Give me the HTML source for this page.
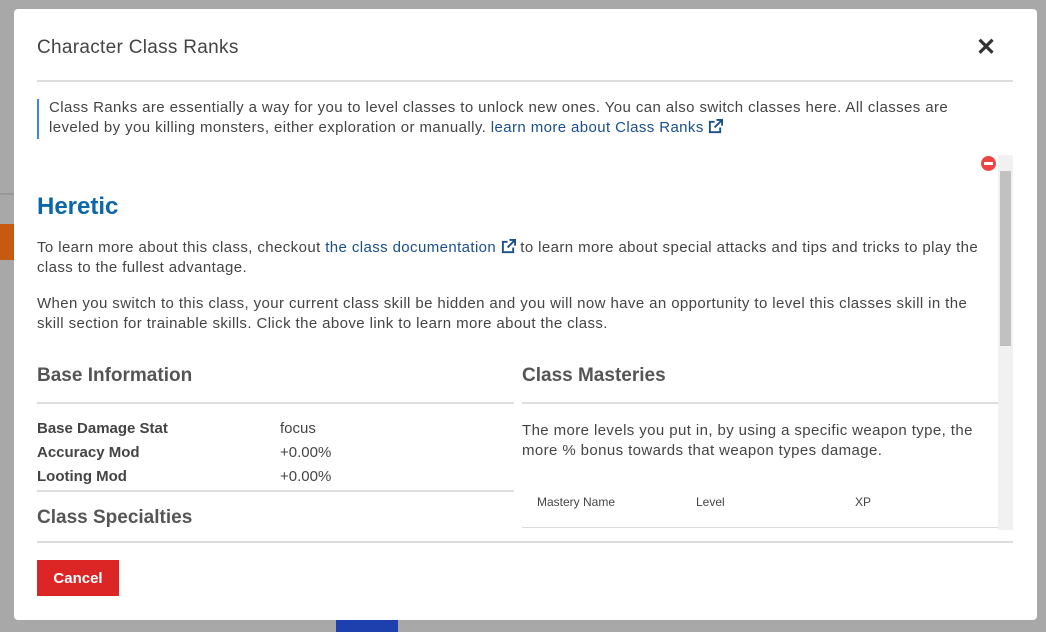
<!DOCTYPE html><html><head><style>
body{margin:0;width:1046px;height:632px;background:#a8a8a8;font-family:"Liberation Sans",sans-serif;overflow:hidden;position:relative;color:#444}
.m{position:absolute;left:14px;top:9px;width:1023px;height:611px;background:#fff;border-radius:4px}
.a{position:absolute}
.hr{position:absolute;height:2px;background:#ddd}
a{color:#1a4f8a;text-decoration:none}
p{margin:0;font-size:15px;line-height:20px;letter-spacing:.4px}
.ext{display:inline-block;vertical-align:-2px}
</style></head><body>
<div class="a" style="left:0;top:193px;width:14px;height:2px;background:#999"></div>
<div class="a" style="left:0;top:224px;width:14px;height:36px;background:#c65a10"></div>
<div class="m">
<div class="a" style="left:23px;top:28px;font-size:19px;color:#444;letter-spacing:.3px">Character Class Ranks</div>
<div class="a" style="left:962px;top:24px;font-size:24px;font-weight:bold;color:#333">✕</div>
<div class="hr" style="left:23px;top:71px;width:976px"></div>
<div class="a" style="left:23px;top:90px;width:2px;height:40px;background:#3b82f6"></div>
<p class="a" style="left:35px;top:89px;width:925px">Class Ranks are essentially a way for you to level classes to unlock new ones. You can also switch classes here. All classes are leveled by you killing monsters, either exploration or manually. <a>learn more about Class Ranks <svg class="ext" width="15" height="15" viewBox="0 0 16 16"><path d="M13 9v5H2V3h5" fill="none" stroke="#1a4f8a" stroke-width="2"/><path d="M9 1h6v6M15 1L7 9" fill="none" stroke="#1a4f8a" stroke-width="2"/></svg></a></p>
<div class="a" style="left:984px;top:146px;width:15px;height:375px;background:#f1f1f1"></div>
<div class="a" style="left:986px;top:162px;width:11px;height:175px;background:#c1c1c1"></div>
<div class="a" style="left:967px;top:147px;width:15px;height:15px;border-radius:50%;background:#ef4444"><div style="position:absolute;left:3px;top:6px;width:9px;height:3px;background:#fff"></div></div>
<div class="a" style="left:23px;top:184px;font-size:24px;font-weight:bold;color:#0b67a8">Heretic</div>
<p class="a" style="left:23px;top:229px;width:960px">To learn more about this class, checkout <a>the class documentation <svg class="ext" width="15" height="15" viewBox="0 0 16 16"><path d="M13 9v5H2V3h5" fill="none" stroke="#1a4f8a" stroke-width="2"/><path d="M9 1h6v6M15 1L7 9" fill="none" stroke="#1a4f8a" stroke-width="2"/></svg></a> to learn more about special attacks and tips and tricks to play the class to the fullest advantage.</p>
<p class="a" style="left:23px;top:285px;width:960px">When you switch to this class, your current class skill be hidden and you will now have an opportunity to level this classes skill in the skill section for trainable skills. Click the above link to learn more about the class.</p>
<div class="a" style="left:23px;top:356px;font-size:19px;font-weight:bold;color:#555">Base Information</div>
<div class="hr" style="left:23px;top:393px;width:477px"></div>
<div class="a" style="left:23px;top:408px;font-size:15px;line-height:24px;font-weight:bold;color:#444">Base Damage Stat<br>Accuracy Mod<br>Looting Mod</div>
<div class="a" style="left:266px;top:408px;font-size:15px;line-height:24px">focus<br>+0.00%<br>+0.00%</div>
<div class="hr" style="left:23px;top:481px;width:477px"></div>
<div class="a" style="left:23px;top:498px;font-size:19px;font-weight:bold;color:#555">Class Specialties</div>
<div class="a" style="left:508px;top:356px;font-size:19px;font-weight:bold;color:#555">Class Masteries</div>
<div class="hr" style="left:508px;top:393px;width:476px"></div>
<p class="a" style="left:508px;top:412px;width:470px">The more levels you put in, by using a specific weapon type, the more % bonus towards that weapon types damage.</p>
<div class="a" style="left:523px;top:486px;font-size:12px">Mastery Name</div>
<div class="a" style="left:682px;top:486px;font-size:12px">Level</div>
<div class="a" style="left:841px;top:486px;font-size:12px">XP</div>
<div class="a" style="left:508px;top:518px;width:476px;height:1px;background:#ddd"></div>
<div class="hr" style="left:23px;top:532px;width:976px"></div>
<div class="a" style="left:23px;top:551px;width:82px;height:36px;background:#dc2626;color:#fff;font-size:15px;font-weight:bold;line-height:38px;text-align:center">Cancel</div>
</div>
<div class="a" style="left:336px;top:620px;width:62px;height:12px;background:#1e40af"></div>
</body></html>
